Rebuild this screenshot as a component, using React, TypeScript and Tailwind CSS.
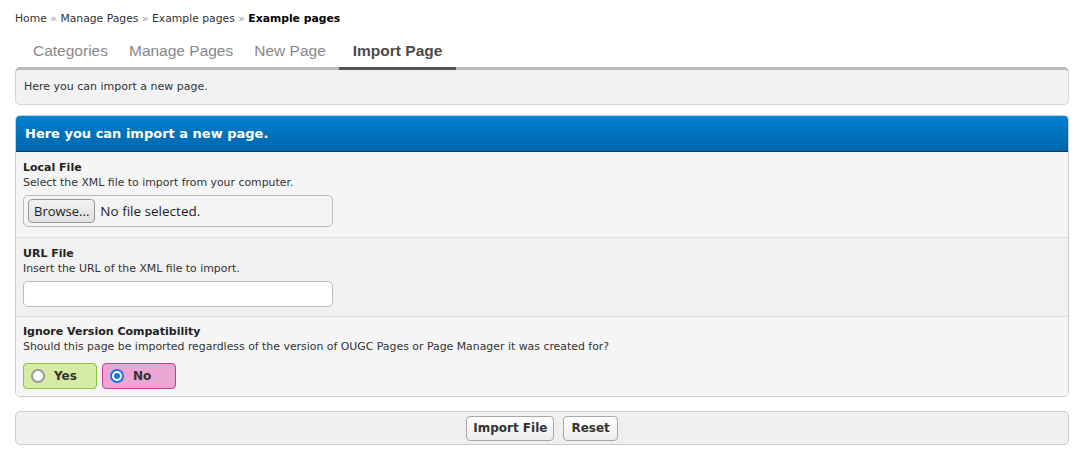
import { useState } from "react";

const tabs = ["Categories", "Manage Pages", "New Page", "Import Page"];

const ImportPage = () => {
  const [ignore, setIgnore] = useState(false);
  const [url, setUrl] = useState("");

  return (
    <div className="px-[15px] pt-[12px] pb-[10px] text-[#333] font-['DejaVu_Sans',Verdana,sans-serif]">
      {/* Breadcrumb */}
      <div className="text-[10.8px] leading-[14px] text-[#333]">
        <span>Home</span>
        <span className="text-[#999]"> » </span>
        <span>Manage Pages</span>
        <span className="text-[#999]"> » </span>
        <span>Example pages</span>
        <span className="text-[#999]"> » </span>
        <span className="font-bold text-black">Example pages</span>
      </div>

      {/* Tabs */}
      <div className="flex ml-[10px] mt-[11px] gap-[5px] relative z-10 font-['Liberation_Sans',Arial,sans-serif]">
        {tabs.map((t) => {
          const active = t === "Import Page";
          return (
            <div
              key={t}
              className={
                active
                  ? "px-[14px] h-[33px] leading-[28px] text-[15.5px] font-bold text-[#4a4a4a] border-b-[3px] border-[#555] -mb-[3px]"
                  : "px-[8px] h-[30px] leading-[28px] text-[15.5px] text-[#888]"
              }
            >
              {t}
            </div>
          );
        })}
      </div>

      {/* Notice */}
      <div className="bg-[#f2f2f2] border border-[#d4d4d4] border-t-[3px] border-t-[#bbb] rounded-[5px] h-[38px] px-[8px] flex items-center text-[11px]">
        Here you can import a new page.
      </div>

      {/* Form table */}
      <div className="mt-[10px] border border-[#ccc] rounded-[5px] overflow-hidden">
        <div className="h-[36px] bg-gradient-to-b from-[#0082d2] to-[#0066aa] border-b border-[#0b3a5e] flex items-center px-[9px] text-white font-bold text-[13px]">
          Here you can import a new page.
        </div>

        <div className="bg-[#f5f5f5] px-[7px] pt-[8px] pb-[10px]">
          <div className="font-bold text-[11px] leading-[15px] text-[#222]">Local File</div>
          <div className="text-[10.9px] leading-[15px] text-[#333]">
            Select the XML file to import from your computer.
          </div>
          <div className="mt-[5px] w-[310px] h-[32px] border border-[#bbb] rounded-[5px] flex items-center px-[4px] gap-[5px] bg-[#f4f4f4]">
            <button className="h-[24px] px-[5px] border border-[#999] rounded-[4px] bg-gradient-to-b from-[#f2f2f2] to-[#e0e0e0] text-[13px] text-[#222] font-['Open_Sans',sans-serif] leading-none">
              Browse...
            </button>
            <span className="text-[13.5px] text-[#222] font-['Open_Sans',sans-serif]">
              No file selected.
            </span>
          </div>
        </div>

        <div className="bg-[#f1f1f1] border-t border-[#ddd] px-[7px] pt-[8px] pb-[9px]">
          <div className="font-bold text-[11px] leading-[15px] text-[#222]">URL File</div>
          <div className="text-[10.9px] leading-[15px] text-[#333]">
            Insert the URL of the XML file to import.
          </div>
          <input
            value={url}
            onChange={(e) => setUrl(e.target.value)}
            className="mt-[5px] block w-[310px] h-[26px] border border-[#bbb] rounded-[5px] bg-white outline-none px-[4px] text-[12px]"
          />
        </div>

        <div className="bg-[#f5f5f5] border-t border-[#ddd] px-[7px] pt-[7px] pb-[7px]">
          <div className="font-bold text-[11px] leading-[15px] text-[#222]">Ignore Version Compatibility</div>
          <div className="text-[10.9px] leading-[15px] text-[#333]">
            Should this page be imported regardless of the version of OUGC Pages or Page Manager it was created for?
          </div>
          <div className="mt-[9px] flex gap-[5px]">
            <label
              onClick={() => setIgnore(true)}
              className="w-[74px] h-[26px] bg-[#d6eba3] border border-[#8dc63f] rounded-[4px] flex items-center pl-[7px] gap-[9px] font-bold text-[12px] cursor-pointer"
            >
              <Radio checked={ignore} />
              Yes
            </label>
            <label
              onClick={() => setIgnore(false)}
              className="w-[74px] h-[26px] bg-[#eca6d3] border border-[#cc3b8c] rounded-[4px] flex items-center pl-[7px] gap-[9px] font-bold text-[12px] cursor-pointer"
            >
              <Radio checked={!ignore} />
              No
            </label>
          </div>
        </div>
      </div>

      {/* Buttons */}
      <div className="mt-[14px] h-[34px] bg-[#efefef] border border-[#ccc] rounded-[5px] flex items-center justify-center gap-[9px]">
        <button className="h-[25px] px-[6px] border border-[#a8a8a8] rounded-[4px] bg-gradient-to-b from-white to-[#ececec] font-bold text-[12px] text-[#333]">
          Import File
        </button>
        <button className="h-[25px] px-[7px] border border-[#a8a8a8] rounded-[4px] bg-gradient-to-b from-white to-[#ececec] font-bold text-[12px] text-[#333]">
          Reset
        </button>
      </div>
    </div>
  );
};

const Radio = ({ checked }: { checked: boolean }) =>
  checked ? (
    <span className="w-[14px] h-[14px] rounded-full bg-white border-[2px] border-[#1a73e8] flex items-center justify-center">
      <span className="w-[6px] h-[6px] rounded-full bg-[#1a73e8]" />
    </span>
  ) : (
    <span className="w-[14px] h-[14px] rounded-full bg-white border-[2px] border-[#999]" />
  );

export default function App() {
  return <ImportPage />;
}
